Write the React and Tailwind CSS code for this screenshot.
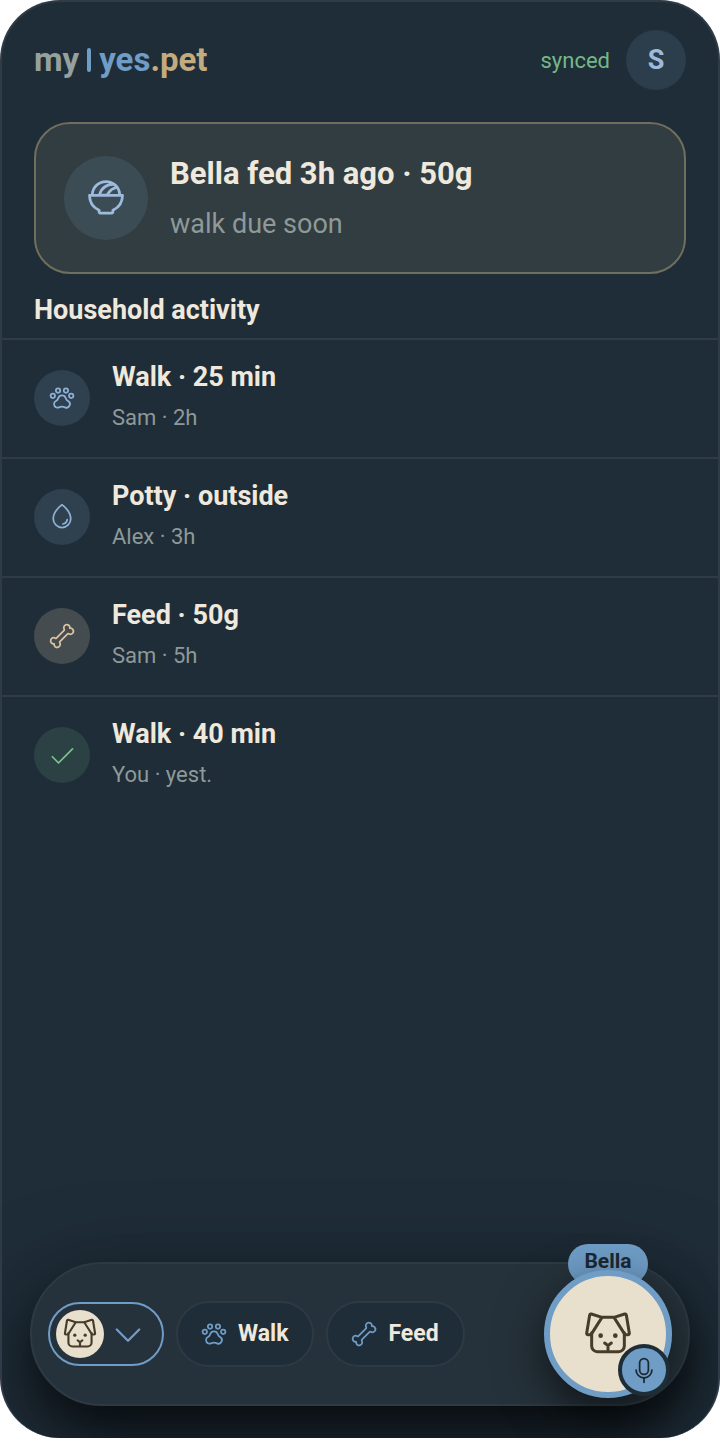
import {
    PiBone,
    PiBowlFood,
    PiCaretDown,
    PiCheck,
    PiDrop,
    PiMicrophone,
    PiPawPrint,
} from 'react-icons/pi'

const activity = [
    { id: 1, title: 'Walk · 25 min', meta: 'Sam · 2h', Icon: PiPawPrint, tone: 'bg-[#2f404e] text-[#8fb1d8]' },
    { id: 2, title: 'Potty · outside', meta: 'Alex · 3h', Icon: PiDrop, tone: 'bg-[#2f404e] text-[#8fb1d8]' },
    { id: 3, title: 'Feed · 50g', meta: 'Sam · 5h', Icon: PiBone, tone: 'bg-[#454c4f] text-[#d9c3a0]' },
    { id: 4, title: 'Walk · 40 min', meta: 'You · yest.', Icon: PiCheck, tone: 'bg-[#2b4144] text-[#78c38b]' },
]

const quickActions = [
    { label: 'Walk', Icon: PiPawPrint },
    { label: 'Feed', Icon: PiBone },
]

function DogFace({ className }) {
    return (
        <svg
            viewBox="0 0 144 144"
            className={className}
            fill="none"
            stroke="currentColor"
            strokeWidth="9"
            strokeLinecap="round"
            strokeLinejoin="round"
            aria-hidden="true"
        >
            <path d="M54 22H90" />
            <path d="M54 22L22 12Q18 11 17 15L8 70Q8 74 12 74H18Q21 74 23 71Z" />
            <path d="M90 22L122 12Q126 11 127 15L136 70Q136 74 132 74H126Q123 74 121 71Z" />
            <path d="M23 68V108A17 17 0 0 0 40 125H104A17 17 0 0 0 121 108V68" />
            <path d="M62 99L72 107L82 99M72 107V122" />
            <circle cx="50" cy="77" r="7" fill="currentColor" stroke="none" />
            <circle cx="94" cy="77" r="7" fill="currentColor" stroke="none" />
        </svg>
    )
}

function Header() {
    return (
        <header className="flex items-center justify-between px-8 pt-7">
            <a href="#" className="flex items-center text-[33px] leading-10 font-bold">
                <span className="text-[#96a09f]">my</span>
                <span className="mx-2 h-6 w-1 rounded-full bg-[#6f9dc6]" />
                <span className="text-[#6f9dc6]">yes</span>
                <span className="text-[#c2ab7f]">.pet</span>
            </a>
            <div className="flex items-center gap-4">
                <span className="text-[22px] text-[#74b886]">synced</span>
                <button
                    type="button"
                    aria-label="Account"
                    className="size-[60px] rounded-full bg-[#2c3d4c] text-[27px] font-bold text-[#9dbbdc]"
                >
                    S
                </button>
            </div>
        </header>
    )
}

function StatusCard() {
    return (
        <section className="mx-8 mt-8 flex items-center gap-[22px] rounded-[36px] border-2 border-[#706e5c] bg-[#323d41] px-7 py-6">
            <div className="flex size-[84px] shrink-0 items-center justify-center rounded-full bg-[#3c4c55] text-[#9dbbdc]">
                <PiBowlFood className="size-11" />
            </div>
            <div>
                <p className="text-[31px] leading-[52px] font-bold">Bella fed 3h ago · 50g</p>
                <p className="text-[27px] leading-[48px] text-[#8e9999]">walk due soon</p>
            </div>
        </section>
    )
}

function ActivityList() {
    return (
        <section>
            <h2 className="px-8 pt-[18px] pb-2.5 text-[27px] leading-9 font-bold">Household activity</h2>
            <ul>
                {activity.map(({ id, title, meta, Icon, tone }) => (
                    <li key={id} className="flex h-[119px] items-center gap-[22px] border-t-2 border-[#2f3c47] px-8 pb-0.5">
                        <div className={`flex size-14 shrink-0 items-center justify-center rounded-full ${tone}`}>
                            <Icon className="size-7" />
                        </div>
                        <div className="pb-0.5">
                            <p className="text-[27px] leading-[42px] font-bold">{title}</p>
                            <p className="text-[22px] leading-10 text-[#8e9999]">{meta}</p>
                        </div>
                    </li>
                ))}
            </ul>
        </section>
    )
}

function Dock() {
    return (
        <nav className="mx-7 mt-auto mb-8 flex items-center gap-3 rounded-full border-2 border-[#2d3a43] bg-[#26323b] px-4 py-1.5 shadow-[0_32px_96px_rgba(0,0,0,0.5),0_24px_48px_-4px_rgba(0,0,0,0.5)]">
            <button
                type="button"
                aria-label="Switch pet"
                className="flex h-16 items-center gap-1.5 rounded-full border-2 border-[#6f9dc6] pr-4 pl-1.5 text-[#6f9dc6]"
            >
                <span className="flex size-12 items-center justify-center rounded-full bg-[#e8dfcc] text-[#463c2a]">
                    <DogFace className="size-[34px]" />
                </span>
                <PiCaretDown className="size-9" />
            </button>
            {quickActions.map(({ label, Icon }) => (
                <button
                    key={label}
                    type="button"
                    className="flex h-[66px] items-center gap-2.5 rounded-full border-2 border-[#2d3a43] bg-[#1f2d38] pr-6 pl-[22px] text-[23px] font-bold"
                >
                    <Icon className="size-7 text-[#6f9dc6]" />
                    {label}
                </button>
            ))}
            <div className="relative ml-auto">
                <span className="absolute -top-[26px] left-6 h-10 w-20 rounded-full bg-[#6f9dc6] text-center text-[21px] leading-[34px] font-bold text-[#1c2832]">
                    Bella
                </span>
                <button
                    type="button"
                    aria-label="Log for Bella"
                    className="relative flex size-32 items-center justify-center rounded-full border-6 border-[#6f9dc6] bg-[#e8dfcc] text-[#463c2a] shadow-[0_16px_48px_rgba(0,0,0,0.6)]"
                >
                    <DogFace className="size-12" />
                </button>
                <button
                    type="button"
                    aria-label="Record a note"
                    className="absolute right-0.5 bottom-0.5 flex size-[52px] items-center justify-center rounded-full border-4 border-[#1f2d38] bg-[#6f9dc6] text-[#1c2832]"
                >
                    <PiMicrophone className="size-7" />
                </button>
            </div>
        </nav>
    )
}

function App() {
    return (
        <div className="flex min-h-screen flex-col bg-white pb-1 font-[Roboto,sans-serif] text-[#efe9dd]">
            <main className="flex grow flex-col overflow-hidden rounded-[60px] border-2 border-b-0 border-[#2f3c47] bg-[#1f2d38]">
                <Header />
                <StatusCard />
                <ActivityList />
                <Dock />
            </main>
        </div>
    )
}

export default App
